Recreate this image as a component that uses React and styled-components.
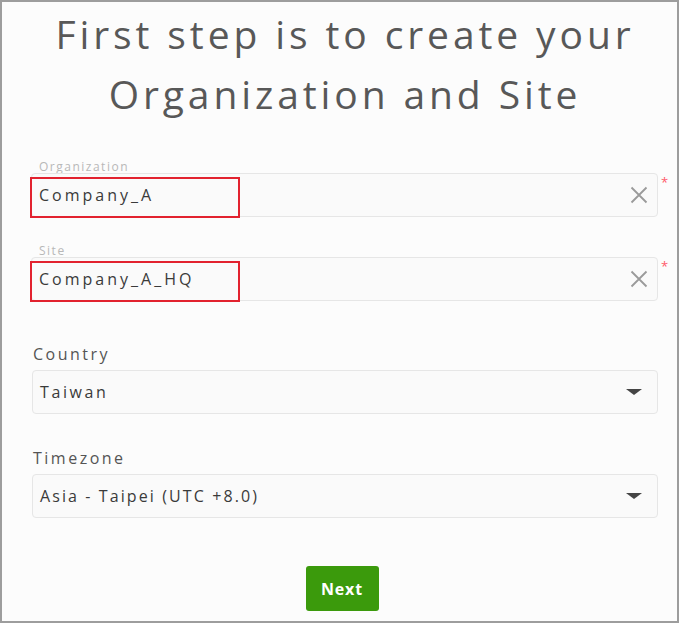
import React from "react";
import styled, { createGlobalStyle } from "styled-components";

const GlobalStyle = createGlobalStyle`
  html, body {
    margin: 0;
    padding: 0;
    background: #ffffff;
  }
  body {
    font-family: "Open Sans", Lato, sans-serif;
  }
`;

export const Frame = styled.div`
  box-sizing: border-box;
  width: 679px;
  height: 623px;
  border: 2px solid #9d9d9d;
  background: #fcfcfc;
  display: flex;
  flex-direction: column;
  padding: 0 10px 0 29px;
`;

export const Title = styled.h1`
  margin: 2px 0 0;
  font-family: "Open Sans", sans-serif;
  font-weight: 400;
  font-size: 39px;
  line-height: 60px;
  letter-spacing: 3.9px;
  color: #585858;
  text-align: center;
  padding-right: 8px;
  white-space: nowrap;
`;

export const Form = styled.form`
  display: flex;
  flex-direction: column;
  margin-top: ${(p) => p.$top || 0}px;
`;

export const FormGroup = styled.div`
  display: flex;
  flex-direction: column;
  margin-top: ${(p) => p.$gap || 0}px;
`;

export const FloatLabel = styled.label`
  font-size: 12px;
  line-height: 12px;
  letter-spacing: 1.5px;
  color: #b8b8b8;
  padding-left: 8px;
  height: 12px;
`;

export const Label = styled.label`
  font-size: 16px;
  line-height: 20px;
  letter-spacing: 2.5px;
  color: #555;
  padding-left: 2px;
  margin-bottom: 6px;
`;

export const Row = styled.div`
  display: flex;
  align-items: flex-start;
`;

export const Field = styled.div`
  position: relative;
  box-sizing: border-box;
  flex: none;
  width: ${(p) => (p.$select ? 626 : 627)}px;
  height: 44px;
  border: 1px solid #e6e6e6;
  border-radius: 4px;
  background: #fafafa;
  display: flex;
  align-items: center;
  padding: 0 ${(p) => (p.$select ? 15 : 9)}px 0 7px;
  margin-left: ${(p) => (p.$select ? 1 : 0)}px;
`;

export const Value = styled.span`
  flex: 1;
  font-size: 16px;
  letter-spacing: ${(p) => p.$ls || 2.6}px;
  color: #3a3a3a;
`;

export const Highlight = styled.span`
  position: absolute;
  left: -2px;
  top: 3px;
  width: 210px;
  height: 41px;
  box-sizing: border-box;
  border: 2px solid #e2222f;
  pointer-events: none;
`;

export const Required = styled.span`
  color: #ff5a6a;
  font-size: 13px;
  line-height: 13px;
  margin: 3px 0 0 3px;
`;

export const Caret = styled.span`
  width: 0;
  height: 0;
  border-left: 8px solid transparent;
  border-right: 8px solid transparent;
  border-top: 6px solid #444;
`;

export const Footer = styled.div`
  display: flex;
  justify-content: center;
  margin-top: 48px;
  padding-right: 14px;
`;

export const Button = styled.button`
  width: 73px;
  height: 45px;
  border: none;
  border-radius: 3px;
  background: #3b9a0c;
  color: #ffffff;
  font-family: "Open Sans", sans-serif;
  font-weight: 700;
  font-size: 16px;
  letter-spacing: 0.8px;
`;

const ClearIcon = () => (
  <svg width="18" height="18" viewBox="0 0 18 18">
    <path
      d="M1.5 1.5 L16.5 16.5 M16.5 1.5 L1.5 16.5"
      stroke="#9a9a9a"
      strokeWidth="1.8"
      fill="none"
    />
  </svg>
);

const TextField = ({ label, value, gap }) => (
  <FormGroup $gap={gap}>
    <FloatLabel>{label}</FloatLabel>
    <Row>
      <Field>
        <Value $ls={3}>{value}</Value>
        <ClearIcon />
        <Highlight />
      </Field>
      <Required>*</Required>
    </Row>
  </FormGroup>
);

const SelectField = ({ label, value, gap, ls }) => (
  <FormGroup $gap={gap}>
    <Label>{label}</Label>
    <Field $select>
      <Value $ls={ls}>{value}</Value>
      <Caret />
    </Field>
  </FormGroup>
);

export default function App() {
  return (
    <>
      <GlobalStyle />
      <Frame>
        <Title>
          First step is to create your
          <br />
          Organization and Site
        </Title>
        <Form $top={37} onSubmit={(e) => e.preventDefault()}>
          <TextField label="Organization" value="Company_A" />
          <TextField label="Site" value="Company_A_HQ" gap={28} />
          <SelectField label="Country" value="Taiwan" gap={43} />
          <SelectField
            label="Timezone"
            value="Asia - Taipei (UTC +8.0)"
            gap={34}
            ls={2.1}
          />
        </Form>
        <Footer>
          <Button type="submit">Next</Button>
        </Footer>
      </Frame>
    </>
  );
}
